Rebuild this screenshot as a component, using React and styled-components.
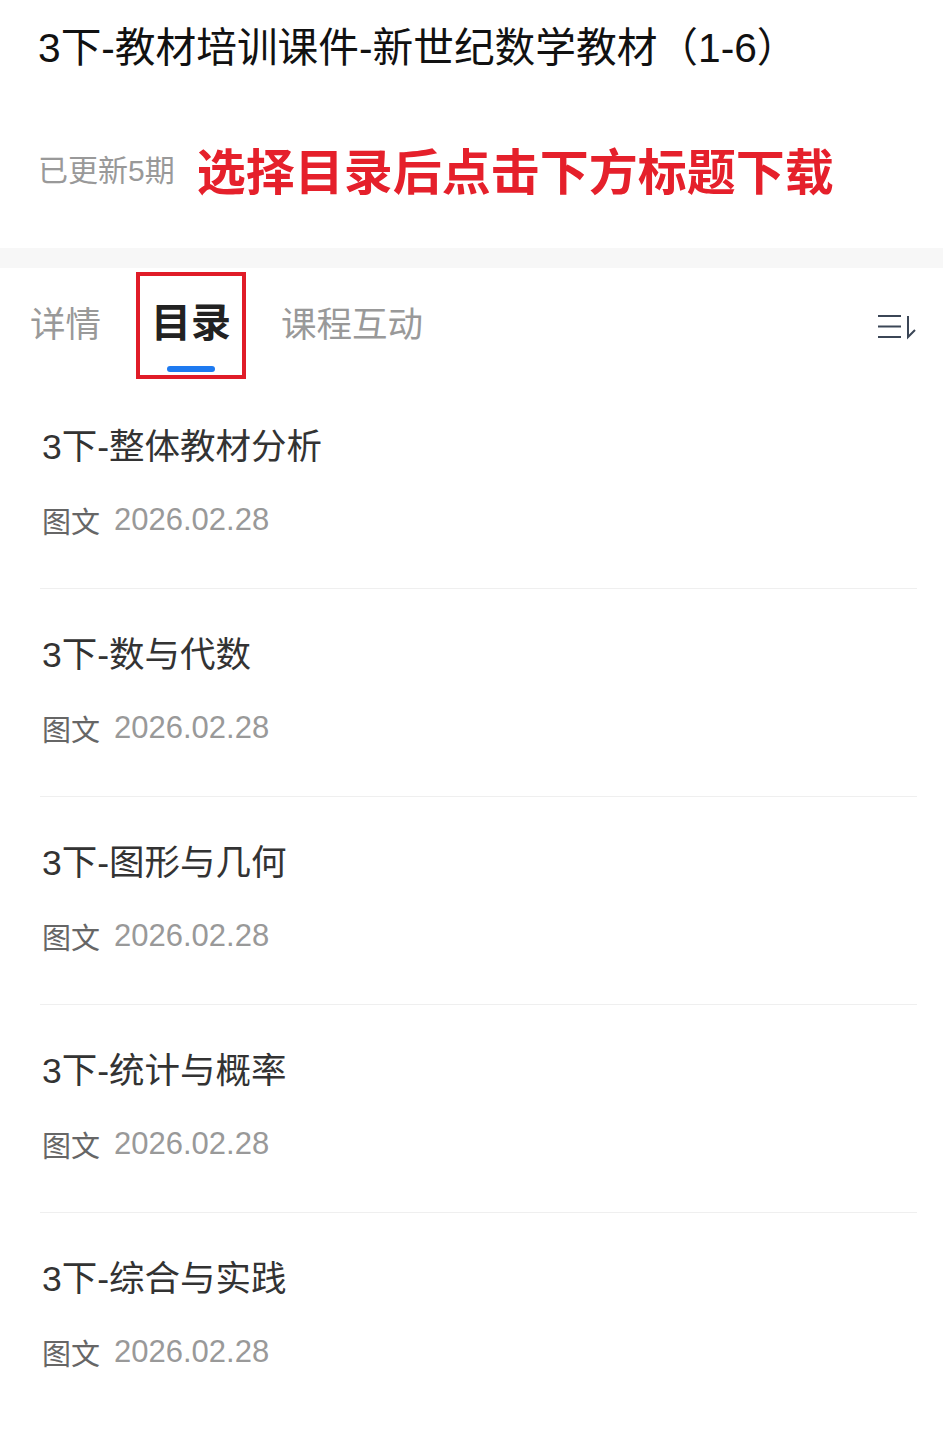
import React from "react";
import styled, { createGlobalStyle } from "styled-components";

const GlobalStyle = createGlobalStyle`
  html, body {
    margin: 0;
    padding: 0;
    background: #fff;
  }
  body {
    font-family: "Liberation Sans", "Noto Sans CJK SC", sans-serif;
    -webkit-font-smoothing: antialiased;
  }
`;

const lessons = [
  { title: "3下-整体教材分析", kind: "图文", date: "2026.02.28" },
  { title: "3下-数与代数", kind: "图文", date: "2026.02.28" },
  { title: "3下-图形与几何", kind: "图文", date: "2026.02.28" },
  { title: "3下-统计与概率", kind: "图文", date: "2026.02.28" },
  { title: "3下-综合与实践", kind: "图文", date: "2026.02.28" },
];

function SortIcon() {
  return (
    <svg width="40" height="28" viewBox="0 0 40 28" fill="none">
      <g stroke="#3b4656" strokeWidth="2" strokeLinecap="square">
        <line x1="2" y1="4" x2="23" y2="4" />
        <line x1="2" y1="14.5" x2="23" y2="14.5" />
        <line x1="2" y1="25" x2="23" y2="25" />
        <polyline points="31,4 31,25 38,18" strokeLinecap="butt" />
      </g>
    </svg>
  );
}

export default function App() {
  return (
    <>
      <GlobalStyle />
      <Page>
        <Header>
          <Title>3下-教材培训课件-新世纪数学教材（1-6）</Title>
          <SubRow>
            <Updated>已更新5期</Updated>
            <Notice>选择目录后点击下方标题下载</Notice>
          </SubRow>
        </Header>
        <Band />
        <TabBar>
          <Tabs>
            <Tab>详情</Tab>
            <ActiveTab>
              <ActiveLabel>目录</ActiveLabel>
              <Indicator />
            </ActiveTab>
            <Tab>课程互动</Tab>
          </Tabs>
          <SortButton type="button">
            <SortIcon />
          </SortButton>
        </TabBar>
        <List>
          {lessons.map((item, i) => (
            <Item key={item.title} $last={i === lessons.length - 1}>
              <ItemTitle>{item.title}</ItemTitle>
              <Meta>
                <Kind>{item.kind}</Kind>
                <DateText>{item.date}</DateText>
              </Meta>
            </Item>
          ))}
        </List>
      </Page>
    </>
  );
}

const Page = styled.div`
  width: 943px;
  min-height: 1432px;
  background: #fff;
`;

const Header = styled.div`
  padding: 22px 20px 50px 38px;
`;

const Title = styled.h1`
  margin: 0;
  font-size: 40.7px;
  line-height: 52px;
  font-weight: 400;
  color: #111;
  white-space: nowrap;
`;

const SubRow = styled.div`
  display: flex;
  align-items: center;
  gap: 22px;
  height: 60px;
  margin-top: 64px;
`;

const Updated = styled.span`
  font-size: 30px;
  color: #999;
`;

const Notice = styled.span`
  font-size: 49px;
  font-weight: 700;
  color: #e5202b;
`;

const Band = styled.div`
  height: 20px;
  background: #f7f7f7;
`;

const TabBar = styled.div`
  height: 113px;
  display: flex;
  align-items: center;
  justify-content: space-between;
  padding: 0 26px 0 30px;
`;

const Tabs = styled.div`
  display: flex;
  align-items: center;
  gap: 35px;
  height: 100%;
`;

const Tab = styled.div`
  font-size: 35.5px;
  line-height: 50px;
  color: #999;
`;

const ActiveTab = styled.div`
  box-sizing: border-box;
  width: 110px;
  height: 107px;
  margin-top: 2px;
  border: 4px solid #e01c28;
  display: flex;
  flex-direction: column;
  align-items: center;
  padding-top: 22px;
`;

const ActiveLabel = styled.div`
  font-size: 40px;
  line-height: 50px;
  font-weight: 700;
  color: #222;
`;

const Indicator = styled.div`
  width: 48px;
  height: 6px;
  border-radius: 3px;
  background: #1e7af0;
  margin-top: 18px;
`;

const SortButton = styled.button`
  border: 0;
  background: none;
  padding: 0;
  display: flex;
  margin-top: 2px;
`;

const List = styled.div`
  padding: 0 26px 0 40px;
`;

const Item = styled.div`
  padding: 44px 0 48px 2px;
  border-bottom: ${(p) => (p.$last ? "none" : "1px solid #efefef")};
`;

const ItemTitle = styled.div`
  font-size: 35.5px;
  line-height: 44px;
  color: #333;
`;

const Meta = styled.div`
  display: flex;
  align-items: center;
  gap: 14px;
  margin-top: 31px;
  height: 40px;
`;

const Kind = styled.span`
  font-size: 29px;
  color: #666;
`;

const DateText = styled.span`
  font-size: 31px;
  color: #999;
`;
